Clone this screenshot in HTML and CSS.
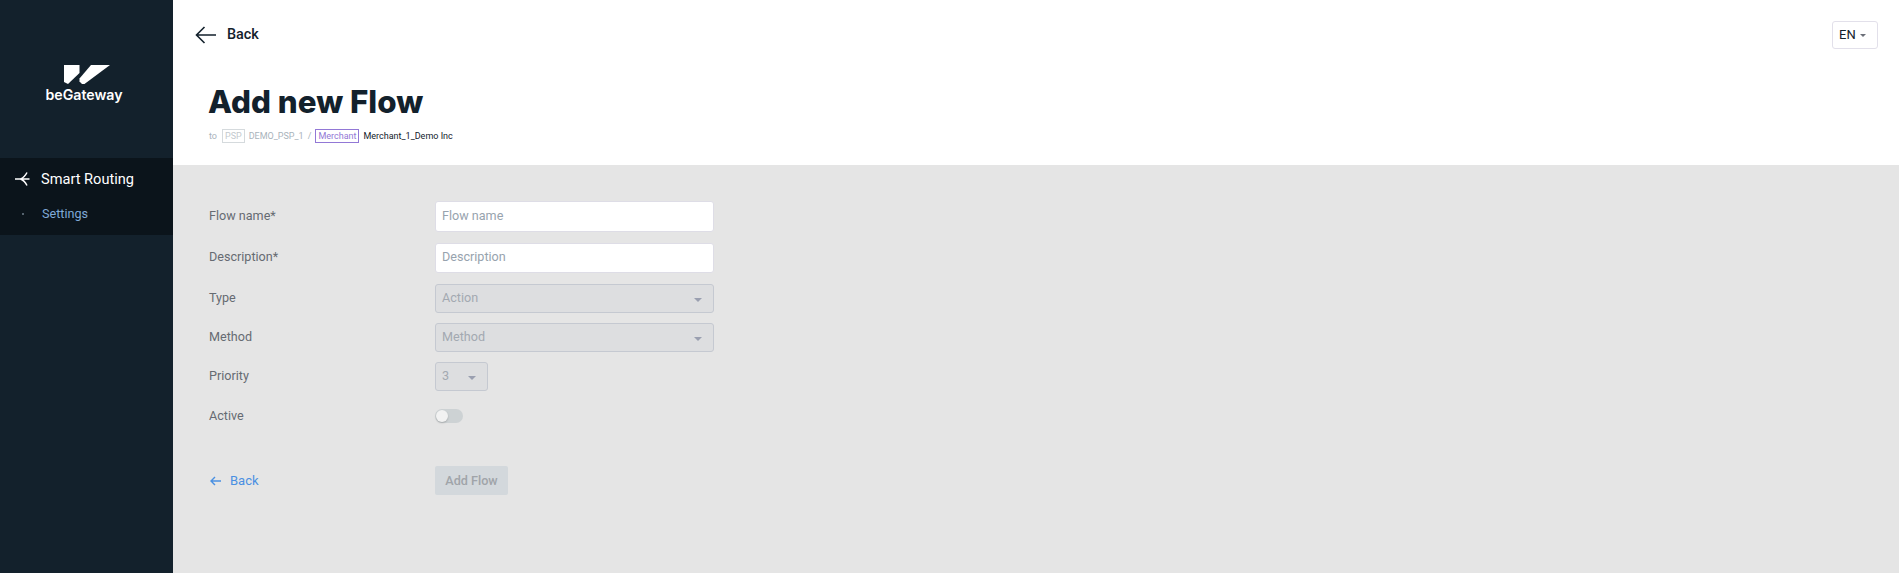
FILE: index.html
```html
<!DOCTYPE html>
<html lang="en">
<head>
    <meta charset="UTF-8">
    <meta name="viewport" content="width=device-width, initial-scale=1.0">
    <title>Add new Flow</title>
    <link rel="stylesheet" href="styles.css">
</head>
<body>
    <div class="layout">
        <aside class="sidebar">
            <div class="logo">
                <svg class="logo-mark" width="46" height="19" viewBox="0 0 46 19">
                    <path d="M0 0H15.5V8L4 19L0 17Z" fill="#fff"/>
                    <path d="M15.5 13.5L27 0H46L20.5 19H18L15.5 16.5Z" fill="#fff"/>
                </svg>
                <div class="logo-text">beGateway</div>
            </div>
            <nav class="menu">
                <div class="menu-title">
                    <svg width="15" height="14" viewBox="0 0 15 14" fill="none" stroke="#fff" stroke-width="1.5">
                        <path d="M0 7H14.5 M5.5 7C8 6 10.5 3.5 12 .5 M5.5 7C8 8 10.5 10.5 12 13.5"/>
                    </svg>
                    <span>Smart Routing</span>
                </div>
                <div class="menu-item">
                    <span class="menu-dot"></span>
                    <span>Settings</span>
                </div>
            </nav>
        </aside>

        <main class="content">
            <header class="page-head">
                <div class="top-bar">
                    <a class="top-back">
                        <svg width="22" height="18" viewBox="0 0 22 18" fill="none" stroke="#13212c" stroke-width="1.6">
                            <path d="M21 9H1.5 M9.5 1L1.5 9L9.5 17"/>
                        </svg>
                        <span>Back</span>
                    </a>
                    <div class="lang">EN <span class="caret caret-dark"></span></div>
                </div>
                <h1>Add new Flow</h1>
                <div class="crumbs">
                    <span class="crumb-to">to</span>
                    <span class="tag tag-grey">PSP</span>
                    <span>DEMO_PSP_1</span>
                    <span>/</span>
                    <span class="tag tag-purple">Merchant</span>
                    <span class="crumb-dark">Merchant_1_Demo Inc</span>
                </div>
            </header>

            <form class="flow-form">
                <div class="form-row row-input">
                    <label>Flow name*</label>
                    <input class="text-input" type="text" placeholder="Flow name">
                </div>
                <div class="form-row row-input">
                    <label>Description*</label>
                    <input class="text-input" type="text" placeholder="Description">
                </div>
                <div class="form-row row-select">
                    <label>Type</label>
                    <div class="select-box"><span>Action</span><span class="caret"></span></div>
                </div>
                <div class="form-row row-select">
                    <label>Method</label>
                    <div class="select-box"><span>Method</span><span class="caret"></span></div>
                </div>
                <div class="form-row row-select">
                    <label>Priority</label>
                    <div class="select-box select-small"><span>3</span><span class="caret"></span></div>
                </div>
                <div class="form-row row-toggle">
                    <label>Active</label>
                    <div class="toggle"><span class="toggle-knob"></span></div>
                </div>
                <div class="form-row row-actions">
                    <a class="form-back">
                        <svg width="11" height="10" viewBox="0 0 11 10" fill="none" stroke="#4a90e2" stroke-width="1.4">
                            <path d="M11 5H1 M5 1L1 5L5 9"/>
                        </svg>
                        <span>Back</span>
                    </a>
                    <button class="submit-btn" type="button" disabled>Add Flow</button>
                </div>
            </form>
        </main>
    </div>
</body>
</html>
```

FILE: styles.css
```css
body {
    font-family: Roboto, sans-serif;
    margin: 0;
    background-color: #e5e5e5;
    color: #13212c;
}
.layout {
    display: flex;
    height: 573px;
    overflow: hidden;
}
.sidebar {
    width: 173px;
    flex-shrink: 0;
    background: #13212c;
}
.logo {
    display: flex;
    flex-direction: column;
    align-items: center;
    height: 158px;
    padding-top: 65px;
    box-sizing: border-box;
}
.logo-text {
    color: #fff;
    font-family: Inter, sans-serif;
    font-size: 14.2px;
    font-weight: 600;
    line-height: 14px;
    margin: 4px 5px 0 0;
}
.menu {
    background: #0b141b;
    height: 77px;
}
.menu-title {
    display: flex;
    align-items: center;
    gap: 11px;
    height: 42px;
    padding: 0 0 0 15px;
    color: #fff;
    font-size: 14.6px;
}
.menu-item {
    display: flex;
    align-items: center;
    height: 27px;
    padding-left: 22px;
    color: #7fa9d6;
    font-size: 12.6px;
}
.menu-dot {
    width: 2px;
    height: 2px;
    background: #55636e;
    margin-right: 18px;
}
.content {
    flex: 1;
    min-width: 0;
}
.page-head {
    background: white;
    height: 165px;
    box-sizing: border-box;
    padding: 0 21px 0 36px;
}
.top-bar {
    display: flex;
    justify-content: space-between;
    align-items: center;
    height: 69px;
}
.top-back {
    display: flex;
    align-items: center;
    gap: 10px;
    margin-left: -14px;
    font-size: 14.4px;
    font-weight: 500;
}
.lang {
    display: flex;
    align-items: center;
    gap: 4px;
    width: 46px;
    height: 28px;
    box-sizing: border-box;
    padding-left: 6px;
    border: 1px solid #e2e0ea;
    border-radius: 3px;
    font-size: 13px;
}
h1 {
    margin: 15px 0 0 -1px;
    font-family: Inter, sans-serif;
    font-size: 31.3px;
    font-weight: 800;
    line-height: 37px;
}
.crumbs {
    display: flex;
    align-items: center;
    gap: 4px;
    margin-top: 8px;
    font-size: 9px;
    color: #a9b3bb;
}
.crumb-to {
    margin-right: 1px;
}
.tag {
    padding: 0 2px;
    line-height: 12px;
    border: 1px solid;
}
.tag-grey {
    border-color: #d5dadd;
    color: #c3c9ce;
}
.tag-purple {
    border-color: #9278d6;
    color: #9278d6;
}
.crumb-dark {
    color: #13212c;
}
.flow-form {
    padding: 36px 0 0 36px;
}
.form-row {
    display: flex;
    align-items: center;
    font-size: 12.6px;
    color: #666b72;
}
.form-row label {
    width: 226px;
    flex-shrink: 0;
    position: relative;
    top: -1px;
}
.row-input {
    height: 30.5px;
    margin-bottom: 11px;
}
.row-select {
    height: 29px;
    margin-bottom: 10px;
}
.row-toggle {
    height: 14px;
    margin-top: 18px;
    margin-bottom: 43px;
}
.row-actions {
    height: 29px;
}
.text-input {
    width: 279px;
    height: 30.5px;
    box-sizing: border-box;
    padding: 0 6px 2px;
    border: 1px solid #dedde6;
    border-radius: 3px;
    background: white;
    font-family: Roboto, sans-serif;
    font-size: 12.6px;
    color: #13212c;
}
.text-input::placeholder {
    color: #97a3ae;
    opacity: 1;
}
.select-box {
    display: flex;
    justify-content: space-between;
    align-items: center;
    width: 279px;
    height: 29px;
    box-sizing: border-box;
    padding: 0 11px 2px 6px;
    border: 1px solid #c5c9d1;
    border-radius: 3px;
    background: #dddee0;
    color: #a3a9b1;
}
.select-small {
    width: 53px;
}
.caret {
    width: 0;
    height: 0;
    margin-top: 4px;
    border-left: 4px solid transparent;
    border-right: 4px solid transparent;
    border-top: 4px solid #9a9fb0;
}
.lang .caret {
    margin-top: 2px;
    border-left-width: 3.5px;
    border-right-width: 3.5px;
    border-top-width: 3.5px;
}
.caret-dark {
    border-top-color: #6b6f78;
}
.toggle {
    position: relative;
    width: 28px;
    height: 14px;
    border-radius: 7px;
    background: #cdd2d4;
}
.toggle-knob {
    position: absolute;
    left: 1px;
    top: 1px;
    width: 12px;
    height: 12px;
    border-radius: 50%;
    background: #f2f2f2;
    box-shadow: 0 1px 2px rgba(0,0,0,0.2);
}
.form-back {
    display: flex;
    align-items: center;
    gap: 9px;
    width: 226px;
    flex-shrink: 0;
    color: #4a90e2;
    font-size: 13px;
}
.form-back svg {
    margin-left: 1px;
}
.submit-btn {
    width: 73px;
    height: 29px;
    border: none;
    border-radius: 2px;
    background: #d3d8dc;
    color: #a0a4a9;
    font-family: Roboto, sans-serif;
    font-size: 12.6px;
    font-weight: 500;
    padding: 0;
}
```
